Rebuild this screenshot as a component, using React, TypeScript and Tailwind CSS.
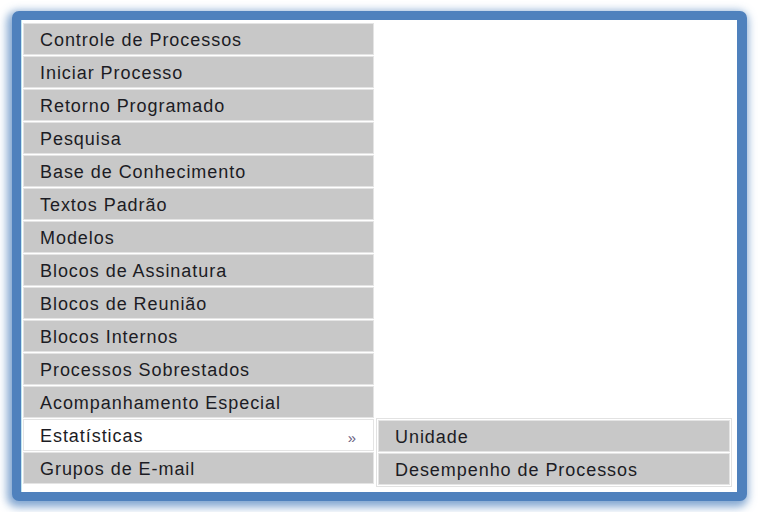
import React from "react";

const items = [
  "Controle de Processos",
  "Iniciar Processo",
  "Retorno Programado",
  "Pesquisa",
  "Base de Conhecimento",
  "Textos Padrão",
  "Modelos",
  "Blocos de Assinatura",
  "Blocos de Reunião",
  "Blocos Internos",
  "Processos Sobrestados",
  "Acompanhamento Especial",
  "Estatísticas",
  "Grupos de E-mail",
];

export default function App() {
  return (
    <div
      className="w-[758px] h-[512px] bg-white overflow-hidden pt-[11px] pl-[12px]"
      style={{ fontFamily: '"Liberation Sans", Arial, sans-serif' }}
    >
      <div className="w-[735px] h-[490px] border-[9px] border-r-[10px] border-[#4f81bd] rounded-[7px] bg-white shadow-[-2px_3px_8px_3px_rgba(79,129,189,0.7)]">
        <div className="h-full border-l border-[#bfe6f0] pt-[3px] pl-[1px]">
          <ul className="w-[351px] flex flex-col gap-[1px]">
            {items.map((t) => {
              const active = t === "Estatísticas";
              return (
                <li
                  key={t}
                  className={
                    "relative h-[32px] border border-[#e4e4e4] flex items-center pl-[16px] pt-[3px] text-[18px] tracking-[0.95px] text-[#1c1c24] " +
                    (active ? "bg-white" : "bg-[#c8c8c8]")
                  }
                >
                  <span>{t}</span>
                  {active && (
                    <>
                      <span className="absolute right-[16px] top-[7px] text-[15px] text-[#6a6080]">»</span>
                      <div className="absolute left-[352px] top-[-2px] w-[356px] border border-[#e2e2e2] bg-white p-[1px] flex flex-col gap-[1px]">
                        {["Unidade", "Desempenho de Processos"].map((s) => (
                          <div
                            key={s}
                            className="h-[32px] border border-[#e4e4e4] bg-[#c8c8c8] flex items-center pl-[16px] pt-[3px] text-[18px] tracking-[0.95px] text-[#1c1c24]"
                          >
                            {s}
                          </div>
                        ))}
                      </div>
                    </>
                  )}
                </li>
              );
            })}
          </ul>
        </div>
      </div>
    </div>
  );
}
